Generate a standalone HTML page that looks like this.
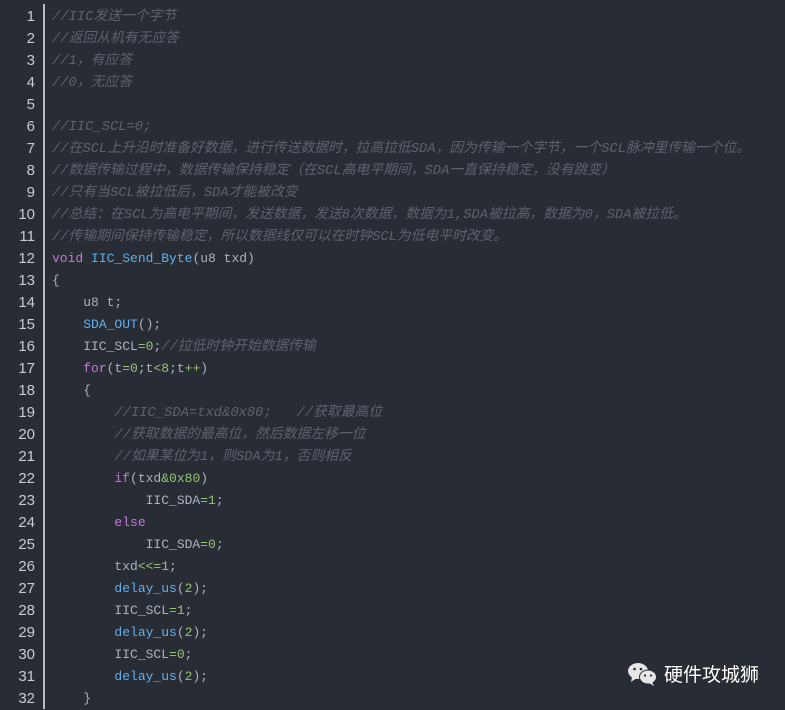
<!DOCTYPE html>
<html><head><meta charset="utf-8"><style>
html,body{margin:0;padding:0;background:#282c34;width:785px;height:709px;overflow:hidden}
.g{position:absolute;left:0;top:6px;width:35px;text-align:right;font:15px/22px "Liberation Sans",sans-serif;color:#c8ccd4}
.line{position:absolute;left:43px;top:4px;width:2px;height:705px;background:#b8bcc4}
.code{position:absolute;left:52px;top:6px;font:13px/22px "Liberation Mono","Noto Sans CJK SC",monospace;color:#abb2bf}
.code div{height:22px;white-space:pre;overflow:visible}
.c{color:#5c6370;font-style:italic;font-size:13.8px;line-height:22px}.k{color:#c678dd}.f{color:#61afef}.n{color:#98c379}
.wx{position:absolute;color:#fff;font:19px "Noto Sans CJK SC",sans-serif}
</style></head><body>
<div class="g">1<br>2<br>3<br>4<br>5<br>6<br>7<br>8<br>9<br>10<br>11<br>12<br>13<br>14<br>15<br>16<br>17<br>18<br>19<br>20<br>21<br>22<br>23<br>24<br>25<br>26<br>27<br>28<br>29<br>30<br>31<br>32</div>
<div class="line"></div>
<div class="code">
<div><span class="c">//IIC发送一个字节</span></div>
<div><span class="c">//返回从机有无应答</span></div>
<div><span class="c">//1，有应答</span></div>
<div><span class="c">//0，无应答</span></div>
<div> </div>
<div><span class="c">//IIC_SCL=0;</span></div>
<div><span class="c">//在SCL上升沿时准备好数据，进行传送数据时，拉高拉低SDA，因为传输一个字节，一个SCL脉冲里传输一个位。</span></div>
<div><span class="c">//数据传输过程中，数据传输保持稳定（在SCL高电平期间，SDA一直保持稳定，没有跳变）</span></div>
<div><span class="c">//只有当SCL被拉低后，SDA才能被改变</span></div>
<div><span class="c">//总结：在SCL为高电平期间，发送数据，发送8次数据，数据为1,SDA被拉高，数据为0，SDA被拉低。</span></div>
<div><span class="c">//传输期间保持传输稳定，所以数据线仅可以在时钟SCL为低电平时改变。</span></div>
<div><span class="k">void</span> <span class="f">IIC_Send_Byte</span>(u8 txd)</div>
<div>{</div>
<div>    u8 t;</div>
<div>    <span class="f">SDA_OUT</span>();</div>
<div>    IIC_SCL<span class="n">=0</span>;<span class="c">//拉低时钟开始数据传输</span></div>
<div>    <span class="k">for</span>(t<span class="n">=0</span>;t<span class="n">&lt;8</span>;t<span class="n">++</span>)</div>
<div>    {</div>
<div>        <span class="c">//IIC_SDA=txd&amp;0x80;   //获取最高位</span></div>
<div>        <span class="c">//获取数据的最高位，然后数据左移一位</span></div>
<div>        <span class="c">//如果某位为1，则SDA为1，否则相反</span></div>
<div>        <span class="k">if</span>(txd<span class="n">&amp;0x80</span>)</div>
<div>            IIC_SDA<span class="n">=1</span>;</div>
<div>        <span class="k">else</span></div>
<div>            IIC_SDA<span class="n">=0</span>;</div>
<div>        txd<span class="n">&lt;&lt;=1</span>;</div>
<div>        <span class="f">delay_us</span>(<span class="n">2</span>);</div>
<div>        IIC_SCL<span class="n">=1</span>;</div>
<div>        <span class="f">delay_us</span>(<span class="n">2</span>);</div>
<div>        IIC_SCL<span class="n">=0</span>;</div>
<div>        <span class="f">delay_us</span>(<span class="n">2</span>);</div>
<div>    }</div>
</div>
<svg style="position:absolute;left:627px;top:662px" width="32" height="24" viewBox="0 0 32 24">
<ellipse cx="11" cy="9" rx="10" ry="8" fill="#e6e6e6"/><path d="M5 15 L4 20 L10 16Z" fill="#e6e6e6"/>
<ellipse cx="21" cy="15" rx="9" ry="7.5" fill="#282c34"/>
<ellipse cx="21" cy="15" rx="8" ry="6.5" fill="#e6e6e6"/><path d="M25 20 L27 24 L22 21Z" fill="#e6e6e6"/>
<circle cx="7.5" cy="7" r="1.3" fill="#282c34"/><circle cx="14" cy="7" r="1.3" fill="#282c34"/>
<circle cx="18" cy="13.5" r="1.1" fill="#282c34"/><circle cx="24" cy="13.5" r="1.1" fill="#282c34"/>
</svg>
<div class="wx" style="left:664px;top:660px">硬件攻城狮</div>
</body></html>
